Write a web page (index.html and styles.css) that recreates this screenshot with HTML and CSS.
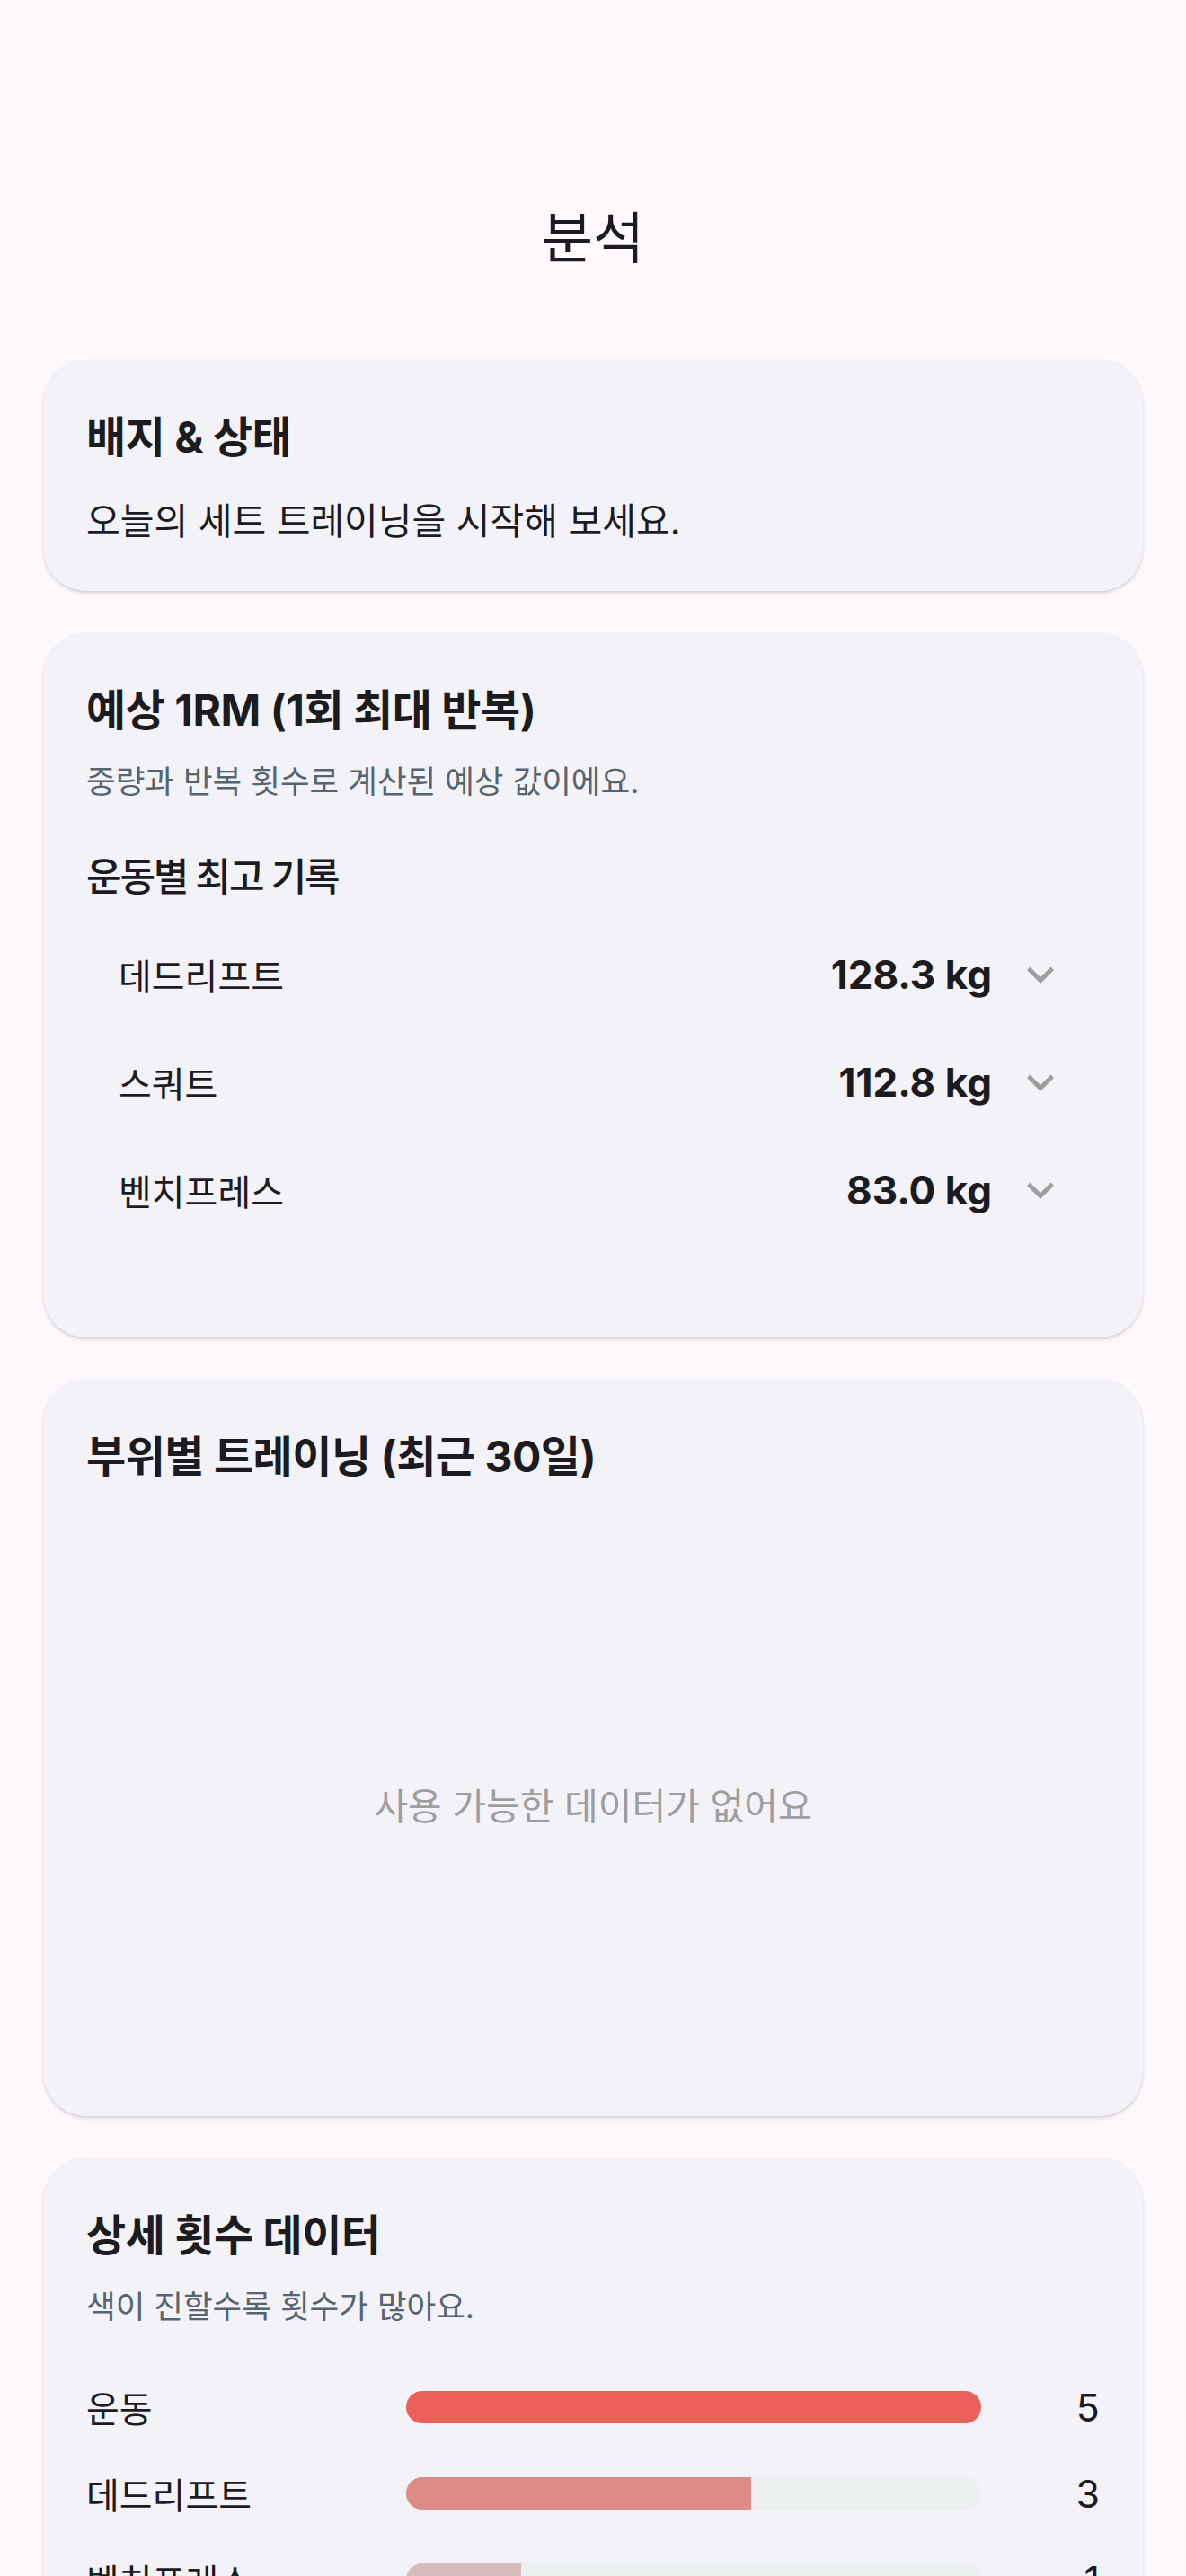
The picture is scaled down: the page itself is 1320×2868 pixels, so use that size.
FILE: index.html
```html
<!DOCTYPE html>
<html lang="ko">
<head>
    <meta charset="UTF-8">
    <meta name="viewport" content="width=device-width, initial-scale=1.0">
    <title>분석</title>
    <link rel="stylesheet" href="styles.css">
</head>
<body>
    <header class="appbar">
        <h1>분석</h1>
    </header>

    <main class="cards">
        <!-- 배지 -->
        <section class="card">
            <h2 class="card-title">배지 &amp; 상태</h2>
            <p class="card-text">오늘의 세트 트레이닝을 시작해 보세요.</p>
        </section>

        <!-- 1RM -->
        <section class="card">
            <h2 class="card-title">예상 1RM (1회 최대 반복)</h2>
            <p class="card-sub">중량과 반복 횟수로 계산된 예상 값이에요.</p>
            <h3 class="section-label">운동별 최고 기록</h3>
            <ul class="records">
                <li class="record">
                    <span class="record-name">데드리프트</span>
                    <span class="record-value">128.3 kg</span>
                    <svg class="chevron" viewBox="0 0 24 24"><path d="M16.59 8.59L12 13.17 7.41 8.59 6 10l6 6 6-6z"/></svg>
                </li>
                <li class="record">
                    <span class="record-name">스쿼트</span>
                    <span class="record-value">112.8 kg</span>
                    <svg class="chevron" viewBox="0 0 24 24"><path d="M16.59 8.59L12 13.17 7.41 8.59 6 10l6 6 6-6z"/></svg>
                </li>
                <li class="record">
                    <span class="record-name">벤치프레스</span>
                    <span class="record-value">83.0 kg</span>
                    <svg class="chevron" viewBox="0 0 24 24"><path d="M16.59 8.59L12 13.17 7.41 8.59 6 10l6 6 6-6z"/></svg>
                </li>
            </ul>
        </section>

        <!-- 부위별 -->
        <section class="card">
            <h2 class="card-title">부위별 트레이닝 (최근 30일)</h2>
            <div class="empty">사용 가능한 데이터가 없어요</div>
        </section>

        <!-- 횟수 -->
        <section class="card">
            <h2 class="card-title">상세 횟수 데이터</h2>
            <p class="card-sub">색이 진할수록 횟수가 많아요.</p>
            <div class="reps">
                <div class="rep-row">
                    <span class="rep-name">운동</span>
                    <div class="track"><div class="fill" style="width: 100%; background: #eb605b;"></div></div>
                    <span class="rep-count">5</span>
                </div>
                <div class="rep-row">
                    <span class="rep-name">데드리프트</span>
                    <div class="track"><div class="fill" style="width: 60%; background: #de8a87;"></div></div>
                    <span class="rep-count">3</span>
                </div>
                <div class="rep-row">
                    <span class="rep-name">벤치프레스</span>
                    <div class="track"><div class="fill" style="width: 20%; background: #d4bcbf;"></div></div>
                    <span class="rep-count">1</span>
                </div>
            </div>
        </section>
    </main>
</body>
</html>
```

FILE: styles.css
```css
* {
    box-sizing: border-box;
}
body {
    margin: 0;
    background-color: #fcf8fc;
    color: #1c1b1f;
    font-family: "Inter", "Noto Sans CJK KR", sans-serif;
}
.appbar {
    height: 376px;
    padding-top: 156px;
    text-align: center;
}
.appbar h1 {
    margin: 0;
    font-size: 62px;
    font-weight: 400;
    line-height: 220px;
}
.cards {
    padding: 25px 48px 48px;
    display: flex;
    flex-direction: column;
    gap: 47px;
}
.card {
    background-color: #f3f2f7;
    border-radius: 48px;
    padding: 48px;
    box-shadow: 0 3px 4px -1px rgba(0, 0, 0, 0.16), 0 0 2px rgba(0, 0, 0, 0.08);
}
.card-title {
    margin: 0;
    font-size: 48px;
    line-height: 76px;
    font-weight: 700;
    letter-spacing: -0.01em;
}
.card-text {
    margin: 25px 0 0;
    font-size: 41px;
    line-height: 60px;
}
.card-sub {
    margin: 17px 0 0;
    font-size: 35.5px;
    line-height: 50px;
    color: #566470;
}
.section-label {
    margin: 50px 0 0;
    font-size: 43px;
    line-height: 60px;
    font-weight: 500;
    letter-spacing: -0.05em;
}
.records {
    list-style: none;
    margin: 19px 0 56px;
    padding: 0;
}
.record {
    display: flex;
    align-items: center;
    height: 120px;
    padding: 0 36px;
}
.record-name {
    flex: 1;
    font-size: 40px;
}
.record-value {
    font-size: 44px;
    font-weight: 700;
}
.chevron {
    width: 60px;
    height: 60px;
    margin-left: 24px;
    fill: #9e9e9e;
}
.empty {
    margin-top: 48px;
    height: 600px;
    display: flex;
    align-items: center;
    justify-content: center;
    font-size: 41px;
    color: #9e9e9e;
}
.reps {
    margin-top: 56px;
    display: flex;
    flex-direction: column;
    gap: 36px;
}
.rep-row {
    display: grid;
    grid-template-columns: 356px 1fr 132px;
    align-items: center;
    height: 60px;
}
.rep-name {
    font-size: 40px;
}
.track {
    height: 36px;
    border-radius: 18px;
    background-color: #eceff0;
    overflow: hidden;
}
.fill {
    height: 100%;
}
.rep-count {
    text-align: right;
    font-size: 43px;
}
```
